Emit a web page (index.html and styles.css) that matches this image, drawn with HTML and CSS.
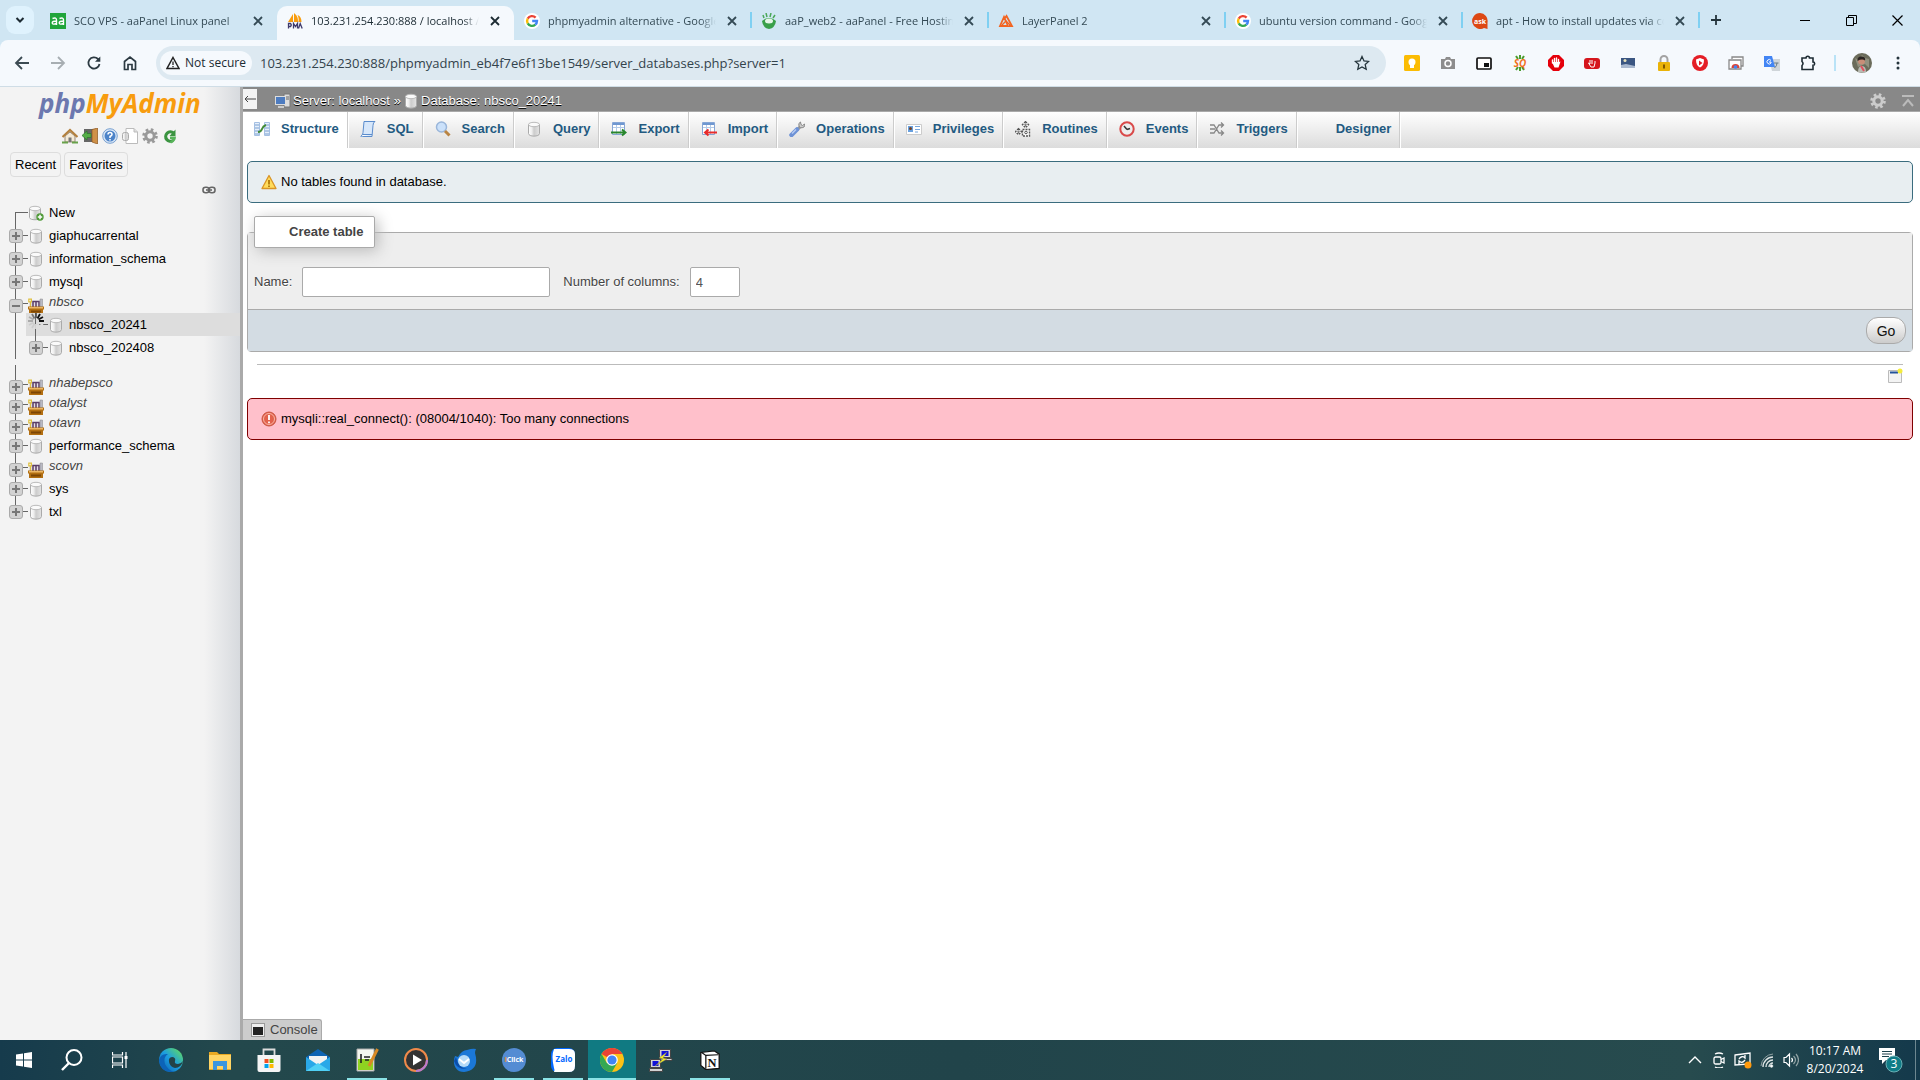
FILE: index.html
```html
<!DOCTYPE html>
<html lang="en">
<head>
<meta charset="utf-8">
<title>103.231.254.230:888 / localhost / nbsco_20241 | phpMyAdmin</title>
<link rel="stylesheet" href="styles.css">
</head>
<body>
<svg class="defs" aria-hidden="true">
  <defs>
    <linearGradient id="silver" x1="0" x2="1" y1="0" y2="0"><stop offset="0" stop-color="#fff"/><stop offset=".3" stop-color="#eee"/><stop offset=".5" stop-color="#ccc"/><stop offset="1" stop-color="#e4e4e4"/></linearGradient>
    <linearGradient id="edgeg" x1="0" x2="1" y1="1" y2="0"><stop offset="0" stop-color="#0c59a4"/><stop offset=".5" stop-color="#1b9de2"/><stop offset="1" stop-color="#6be34f"/></linearGradient>
  </defs>
  <symbol id="close" viewBox="0 0 16 16"><path d="M4 4l8 8M12 4l-8 8" stroke="currentColor" stroke-width="1.8"/></symbol>
  <symbol id="google" viewBox="0 0 16 16"><circle cx="8" cy="8" r="8" fill="#fff"/><g fill="none" stroke-width="2.4"><path d="M11.6 4.6A5 5 0 0 0 3.7 5.6" stroke="#ea4335"/><path d="M3.7 5.6a5 5 0 0 0 0 4.8" stroke="#fbbc05"/><path d="M3.7 10.4a5 5 0 0 0 7.6 1.3" stroke="#34a853"/><path d="M11.3 11.7A5 5 0 0 0 13 8H8.2" stroke="#4285f4"/></g></symbol>
  <symbol id="db" viewBox="0 0 16 16"><path d="M2.5 3.5v9c0 3.500 11 3.500 11 0v-9z" fill="url(#silver)" stroke="#aaa"/><ellipse cx="8" cy="3.500" rx="5.500" ry="2.200" fill="#fafafa" stroke="#bbb"/></symbol>
  <symbol id="dbnew" viewBox="0 0 16 16"><path d="M1.500 3.500v9c0 3 11 3 11 0v-9z" fill="url(#silver)" stroke="#aaa"/><ellipse cx="7" cy="3.500" rx="5.500" ry="2.200" fill="#fafafa" stroke="#bbb"/><circle cx="12" cy="12" r="3.700" fill="#4f9a38"/><path d="M12 9.800v4.400M9.800 12h4.400" stroke="#fff" stroke-width="1.500"/></symbol>
  <symbol id="plus" viewBox="0 0 14 14"><rect x=".5" y=".5" width="13" height="13" rx="2.500" fill="#d2d2d2" stroke="#aaa"/><path d="M7 3v8M3 7h8" stroke="#777" stroke-width="2"/></symbol>
  <symbol id="minus" viewBox="0 0 14 14"><rect x=".5" y=".5" width="13" height="13" rx="2.500" fill="#d2d2d2" stroke="#aaa"/><path d="M3 7h8" stroke="#777" stroke-width="2"/></symbol>
  <symbol id="group" viewBox="0 0 16 16"><path d="M1 9V3h13v6z" fill="#e4dfe6"/><path d="M.8 1.200h2.600v2.600H.8zM2.500 4v5" stroke="#dfc040" stroke-width="1.200" fill="none"/><path d="M5 9V3.500h6V9M8 3.500V9" stroke="#5a3d66" stroke-width="1.500" fill="none"/><path d="M12 1h2.500v8H12z" fill="#b9b9c4" stroke="#888" stroke-width=".5"/><path d="M0 8.500h16v3h-1V16H1v-4.500H0z" fill="#b26f12"/><path d="M1 9h14v1.500H1z" fill="#ecb765"/><path d="M3 12.500h10v2H3z" fill="#7d4605"/></symbol>
  <symbol id="gear" viewBox="0 0 16 16"><circle cx="8" cy="8" r="6.300" fill="none" stroke="currentColor" stroke-width="3" stroke-dasharray="2.500 2.448"/><circle cx="8" cy="8" r="4.200" fill="none" stroke="currentColor" stroke-width="3"/></symbol>
  <symbol id="spin" viewBox="0 0 16 16"><g stroke-width="1.800"><path d="M8 0v5" stroke="#555"/><path d="M12 1l-2.500 4.500" stroke="#111"/><path d="M15 4l-4.500 2.500M16 8h-5" stroke="#111"/><path d="M15 12l-4.500-2.500M12 15l-2.500-4.500M8 16v-5" stroke="#ddd"/><path d="M4 15l2.500-4.500M1 12l4.500-2.500" stroke="#ccc"/><path d="M0 8h5M1 4l4.500 2.500" stroke="#aaa"/><path d="M4 1l2.500 4.500" stroke="#777"/></g></symbol>
  <symbol id="pma" viewBox="0 0 16 16"><path d="M1 9L6 1v8zM7 9V0c4 3 4 6 4 9zM11.500 9c.5-3 0-5-1-7 3 1 4 4 4 7z" fill="#f89c0e"/><path d="M1.500 15.500v-5h2q1.500 1.500 0 3h-2M6.500 15.500v-5l2 3 2-3v5M11.500 15.500l1.700-5 2 5" fill="none" stroke="#3e3a6d" stroke-width="1.300"/></symbol>
</svg>

<header class="browser">
  <div class="tabstrip">
    <button class="tabsearch" aria-label="Search tabs"><svg width="10" height="8" viewBox="0 0 10 8"><path d="M1.500 2L5 5.500 8.500 2" fill="none" stroke="#1d2b33" stroke-width="2"/></svg></button>
    <div class="tabs">
      <div class="tab"><svg class="i16" viewBox="0 0 16 16"><rect width="16" height="16" fill="#20a53a"/><g fill="none" stroke="#fff" stroke-width="1.400"><path d="M2.500 5.500Q6.500 4 6.500 7v5M6.500 8Q2 8 2.200 10T6.500 10.500M9.500 5.500Q13.500 4 13.500 7v5M13.500 8Q9 8 9.200 10t4.300.5"/></g></svg><span>SCO VPS - aaPanel Linux panel</span><button aria-label="Close tab"><svg class="i16"><use href="#close"/></svg></button></div>
      <div class="tab active"><svg class="i16"><use href="#pma"/></svg><span>103.231.254.230:888 / localhost / nbsco</span><button aria-label="Close tab"><svg class="i16"><use href="#close"/></svg></button></div>
      <div class="tab sep"><svg class="i16"><use href="#google"/></svg><span>phpmyadmin alternative - Google Search</span><button aria-label="Close tab"><svg class="i16"><use href="#close"/></svg></button></div>
      <div class="tab sep"><svg class="i16" viewBox="0 0 16 16"><path d="M1 8q1 7 7 8 6-1 7-8-3-3-7-3T1 8z" fill="#39a04a"/><path d="M3 5L2 2M6 4L5 0M9 4l1-4M12 5l2-3" stroke="#4aa858" stroke-width="1.500"/><ellipse cx="8" cy="8" rx="4" ry="2.500" fill="#e7f6e9"/></svg><span>aaP_web2 - aaPanel - Free Hosting</span><button aria-label="Close tab"><svg class="i16"><use href="#close"/></svg></button></div>
      <div class="tab sep"><svg class="i16" viewBox="0 0 16 16"><path d="M2 13L6 4l4 9zM7 5l1.500-2L14 13h-3" fill="none" stroke="#f26522" stroke-width="1.800"/><path d="M4 12l4-4 4 4" fill="none" stroke="#f26522" stroke-width="1.300"/></svg><span>LayerPanel 2</span><button aria-label="Close tab"><svg class="i16"><use href="#close"/></svg></button></div>
      <div class="tab sep"><svg class="i16"><use href="#google"/></svg><span>ubuntu version command - Google</span><button aria-label="Close tab"><svg class="i16"><use href="#close"/></svg></button></div>
      <div class="tab sep"><svg class="i16" viewBox="0 0 16 16"><path d="M8 0a8 8 0 0 1 7.500 9.500V16L12 15A8 8 0 1 1 8 0z" fill="#dd4814"/><text x="8" y="10.500" text-anchor="middle" class="ask">ask</text></svg><span>apt - How to install updates via command</span><button aria-label="Close tab"><svg class="i16"><use href="#close"/></svg></button></div>
    </div>
    <button class="newtab" aria-label="New tab"><svg width="12" height="12" viewBox="0 0 12 12"><path d="M6 1v10M1 6h10" stroke="#24343c" stroke-width="1.800"/></svg></button>
    <div class="wincontrols">
      <button aria-label="Minimize"><svg width="10" height="10"><path d="M0 5.500h10" stroke="#000"/></svg></button>
      <button aria-label="Restore"><svg width="11" height="11" fill="none" stroke="#000"><path d="M.5 2.500h7v8h-7zM2.500 2V.5h8v8H8"/></svg></button>
      <button aria-label="Close"><svg width="11" height="11" stroke="#000" stroke-width="1.200"><path d="M.5.5l10 10M10.500.5l-10 10"/></svg></button>
    </div>
  </div>
  <div class="toolbar">
    <button class="tool" aria-label="Back"><svg class="i16" viewBox="0 0 16 16"><path d="M15 8H2M8 2L2 8l6 6" fill="none" stroke="#3b4a52" stroke-width="1.800"/></svg></button>
    <button class="tool" aria-label="Forward"><svg class="i16" viewBox="0 0 16 16"><path d="M1 8h13M8 2l6 6-6 6" fill="none" stroke="#a7aeb2" stroke-width="1.800"/></svg></button>
    <button class="tool" aria-label="Reload"><svg class="i16" viewBox="0 0 16 16"><path d="M13.500 9A5.600 5.600 0 1 1 12 4l1.500 1.500" fill="none" stroke="#2c3a42" stroke-width="1.800"/><path d="M14.300 1.500v5.200H9z" fill="#2c3a42"/></svg></button>
    <button class="tool" aria-label="Home"><svg class="i16" viewBox="0 0 16 16"><path d="M2.500 14.500V6.500L8 2l5.500 4.500v8H10v-5H6v5z" fill="none" stroke="#2c3a42" stroke-width="1.700"/></svg></button>
    <div class="omnibox">
      <button class="chip"><svg width="14" height="14" viewBox="0 0 14 14"><path d="M7 1.500L13 12.500H1z" fill="none" stroke="#222" stroke-width="1.500"/><path d="M7 5.500v3.500M7 10v1.300" stroke="#222" stroke-width="1.300"/></svg>Not secure</button>
      <input class="url" aria-label="Address" value="103.231.254.230:888/phpmyadmin_eb4f7e6f13be1549/server_databases.php?server=1">
      <button class="star" aria-label="Bookmark"><svg class="i16" viewBox="0 0 16 16"><path d="M8 1.500l2 4.400 4.700.5-3.500 3.200 1 4.700L8 11.900l-4.200 2.400 1-4.700L1.300 6.400 6 5.900z" fill="none" stroke="#24343c" stroke-width="1.300"/></svg></button>
    </div>
    <div class="extensions">
      <button class="tool" aria-label="Keep"><svg class="i16" viewBox="0 0 16 16"><rect width="16" height="16" rx="1.500" fill="#fbbc04"/><circle cx="8" cy="7" r="3.500" fill="#fff"/><path d="M6 10h4v3H6z" fill="#fff"/></svg></button>
      <button class="tool" aria-label="Screenshot"><svg class="i16" viewBox="0 0 16 16"><path d="M1 4h4l1-2h4l1 2h4v10H1z" fill="#8d8d8d"/><circle cx="8" cy="8.500" r="3" fill="#8d8d8d" stroke="#fff" stroke-width="1.500"/></svg></button>
      <button class="tool" aria-label="Picture in picture"><svg class="i16" viewBox="0 0 16 16"><rect x="1" y="3" width="14" height="11" rx="1" fill="#fff" stroke="#111" stroke-width="1.700"/><path d="M8 8h5v4H8z" fill="#111"/></svg></button>
      <button class="tool" aria-label="SEOquake"><svg class="i16" viewBox="0 0 16 16"><path d="M4 1l2 3M8 0v4M12 1l-2 3M4 15l2-3M8 16v-4M12 15l-2-3" stroke="#4b9c2e" stroke-width="2"/><text x="8" y="12" text-anchor="middle" class="sq">SQ</text></svg></button>
      <button class="tool" aria-label="Ad blocker"><svg class="i16" viewBox="0 0 16 16"><path d="M5 0h6l5 5v6l-5 5H5l-5-5V5z" fill="#e5000b"/><path d="M4.500 8V5M6.500 8V3.500M8.500 8V3M10.500 8V4.500" stroke="#fff" stroke-width="1.400" stroke-linecap="round"/><path d="M4 7h7.200l1.300-.5-2 6h-4z" fill="#fff"/></svg></button>
      <button class="tool" aria-label="Video blocker"><svg class="i16" viewBox="0 0 16 16"><rect y="3" width="16" height="11" rx="3" fill="#d5161d"/><path d="M6 5v4l-1.500-1L7 12h3l1-4V6M8 5v4" stroke="#fff" fill="none"/></svg></button>
      <button class="tool" aria-label="Remote desktop"><svg class="i16" viewBox="0 0 16 16"><path d="M1 3h14v10H1z" fill="#3a5682"/><path d="M1 10l5-1 9 2v2H1z" fill="#a8b8cf"/><circle cx="5" cy="5.500" r="1.500" fill="#e9e3bb"/></svg></button>
      <button class="tool" aria-label="Lock"><svg class="i16" viewBox="0 0 16 16"><path d="M4.500 8V4.500a3.500 3.500 0 0 1 7 0V8" fill="none" stroke="#a3a3a3" stroke-width="2"/><rect x="2" y="7" width="12" height="9" rx="1" fill="#eab308"/><path d="M8 9.500v4" stroke="#805800" stroke-width="2"/></svg></button>
      <button class="tool" aria-label="Shield"><svg class="i16" viewBox="0 0 16 16"><circle cx="8" cy="8" r="8" fill="#e41e26"/><path d="M8 3l4 1.500c0 4-1 6.500-4 8-3-1.500-4-4-4-8z" fill="#fff"/><path d="M7 5.500L10.500 8 7 10.500z" fill="#e41e26"/></svg></button>
      <button class="tool" aria-label="Web store"><svg class="i16" viewBox="0 0 16 16"><path d="M4 4V2h11v9h-2M1 5h12v9H1z" fill="#fff" stroke="#888" stroke-width="1.300"/><path d="M3.500 13a4 4 0 0 1 8 0z" fill="#db4437"/><circle cx="7.500" cy="12" r="1.800" fill="#4285f4"/></svg></button>
      <button class="tool" aria-label="Translate"><svg class="i16" viewBox="0 0 16 16"><path d="M5 4h11v12H8z" fill="#cfd5d9"/><path d="M0 1h8l3 11H0z" fill="#4285f4"/><path d="M7 5.500A2.200 2.200 0 1 0 7 8V7H5" fill="none" stroke="#fff"/><path d="M10 8h4.500M13 8q0 3-2.500 5" stroke="#667a86" fill="none"/></svg></button>
      <button class="tool" aria-label="Extensions"><svg class="i16" viewBox="0 0 16 16"><path d="M2 3h4a1.500 1.500 0 0 1 3.500 0H13v4a1.500 1.500 0 0 1 0 3.300V14.500H2v-4q2-1.800 0-4z" fill="none" stroke="#1d2b33" stroke-width="1.600"/></svg></button>
    </div>
    <i class="divider"></i>
    <button class="tool" aria-label="Profile"><svg width="20" height="20" viewBox="0 0 20 20"><circle cx="10" cy="10" r="10" fill="#6b6c5b"/><path d="M3 5l4 2 3-5 3 3 4 1v9l-4-4-7 3z" fill="#92917f"/><circle cx="9.500" cy="8" r="3.500" fill="#c98e78"/><path d="M5.500 8Q5 3 10 3.500q4 .5 3 4-3-2-7.500.5z" fill="#2b2522"/><path d="M6 19q0-6 4-6t4 6.200Q9.500 20.500 6 19z" fill="#b9bcb4"/><path d="M9 13l3 5" stroke="#e2505e" stroke-width="2"/></svg></button>
    <button class="tool" aria-label="Menu"><svg class="i16" viewBox="0 0 16 16" fill="#24343c"><circle cx="8" cy="3" r="1.500"/><circle cx="8" cy="8" r="1.500"/><circle cx="8" cy="13" r="1.500"/></svg></button>
  </div>
</header>

<div class="page">
  <nav class="sidebar">
    <a class="logo" href="#"><span>php</span>MyAdmin</a>
    <div class="navicons">
      <a href="#" aria-label="Home"><svg class="i16" viewBox="0 0 16 16"><path d="M3 8v6h10V8L8 4z" fill="#f3ead8" stroke="#97897a"/><path d="M.5 9L8 2l7.500 7" fill="none" stroke="#b3803e" stroke-width="2.200"/><path d="M6.500 14V9.500h3V14" fill="#777"/><path d="M0 14.500h6M10 14.500h6" stroke="#68a24a" stroke-width="2"/></svg></a>
      <a href="#" aria-label="Log out"><svg class="i16" viewBox="0 0 16 16"><path d="M2 1h13v13H2z" fill="#666"/><path d="M10 1.500L15.500 0v16L10 14z" fill="#cf9148" stroke="#8b5520" stroke-width=".7"/><path d="M0 7.500L5 3v2.500h4v4H5V12z" fill="#55ad47" stroke="#2b7a2b" stroke-width=".7"/></svg></a>
      <a href="#" aria-label="Documentation"><svg class="i16" viewBox="0 0 16 16"><circle cx="8" cy="8" r="7.300" fill="#dbe8f7" stroke="#78a0d0"/><circle cx="8" cy="8" r="5.500" fill="#4c83c8"/><path d="M6 6.500Q6 4.500 8 4.500t2 2Q10 7.500 8 8.500V10M8 11v1.500" fill="none" stroke="#fff" stroke-width="1.500"/></svg></a>
      <a href="#" aria-label="phpMyAdmin docs"><svg class="i16" viewBox="0 0 16 16"><path d="M4 .5h8l3.500 3.500v11.500H4z" fill="#fff" stroke="#bbb"/><path d="M12 .5V4h3.500" fill="#ddd" stroke="#bbb"/><rect x=".5" y="4.500" width="6" height="8" rx="2" fill="url(#silver)" stroke="#aaa"/></svg></a>
      <a href="#" class="grey" aria-label="Settings"><svg class="i16"><use href="#gear"/></svg></a>
      <a href="#" aria-label="Reload"><svg class="i16" viewBox="0 0 16 16"><path d="M11.500 5A4.700 4.700 0 1 0 11 12.500" fill="none" stroke="#3b9440" stroke-width="3.200"/><path d="M13.500 1.500V8H7.500z" fill="#3b9440"/><path d="M8 8.500h6q0 5-5 7l-1-2q2-1 2-2.500H8z" fill="#58b45a"/></svg></a>
    </div>
    <div class="quick"><button>Recent</button><button>Favorites</button></div>
    <div class="linkrow"><svg width="14" height="8" viewBox="0 0 14 8" fill="none" stroke="#666" stroke-width="1.600"><rect x="1" y="1.200" width="6" height="5.600" rx="2.500"/><rect x="7" y="1.200" width="6" height="5.600" rx="2.500"/><path d="M4 4h6"/></svg></div>
    <ul class="tree">
      <li class="row first"><span class="exp"></span><svg class="i16"><use href="#dbnew"/></svg><a href="#">New</a></li>
      <li class="row"><span class="exp"><svg><use href="#plus"/></svg></span><svg class="i16"><use href="#db"/></svg><a href="#">giaphucarrental</a></li>
      <li class="row"><span class="exp"><svg><use href="#plus"/></svg></span><svg class="i16"><use href="#db"/></svg><a href="#">information_schema</a></li>
      <li class="row"><span class="exp"><svg><use href="#plus"/></svg></span><svg class="i16"><use href="#db"/></svg><a href="#">mysql</a></li>
      <li class="row folder"><span class="exp"><svg><use href="#minus"/></svg></span><svg class="i16"><use href="#group"/></svg><a href="#">nbsco</a></li>
      <li class="branch">
        <ul>
          <li class="row selected"><span class="exp"><svg class="spinner"><use href="#spin"/></svg></span><svg class="i16"><use href="#db"/></svg><a href="#">nbsco_20241</a></li>
          <li class="row last"><span class="exp"><svg><use href="#plus"/></svg></span><svg class="i16"><use href="#db"/></svg><a href="#">nbsco_202408</a></li>
        </ul>
      </li>
      <li class="row folder restart"><span class="exp"><svg><use href="#plus"/></svg></span><svg class="i16"><use href="#group"/></svg><a href="#">nhabepsco</a></li>
      <li class="row folder"><span class="exp"><svg><use href="#plus"/></svg></span><svg class="i16"><use href="#group"/></svg><a href="#">otalyst</a></li>
      <li class="row folder"><span class="exp"><svg><use href="#plus"/></svg></span><svg class="i16"><use href="#group"/></svg><a href="#">otavn</a></li>
      <li class="row"><span class="exp"><svg><use href="#plus"/></svg></span><svg class="i16"><use href="#db"/></svg><a href="#">performance_schema</a></li>
      <li class="row folder"><span class="exp"><svg><use href="#plus"/></svg></span><svg class="i16"><use href="#group"/></svg><a href="#">scovn</a></li>
      <li class="row"><span class="exp"><svg><use href="#plus"/></svg></span><svg class="i16"><use href="#db"/></svg><a href="#">sys</a></li>
      <li class="row last"><span class="exp"><svg><use href="#plus"/></svg></span><svg class="i16"><use href="#db"/></svg><a href="#">txl</a></li>
    </ul>
  </nav>

  <main class="main">
    <div class="crumbs">
      <button class="collapse" aria-label="Hide panel"><svg width="12" height="8" viewBox="0 0 12 8"><path d="M12 4H1M4 1L1 4l3 3" fill="none" stroke="#444"/></svg></button>
      <svg class="i16" viewBox="0 0 16 16"><path d="M9 1h6v13H9z" fill="#ddd" stroke="#777"/><path d="M10 4h4M10 6h4" stroke="#666"/><rect x=".5" y="3.500" width="10" height="8" fill="#4e7cc0" stroke="#ddd"/><path d="M3 14h6" stroke="#ccc" stroke-width="2"/></svg>
      <a href="#">Server: localhost</a><span class="raquo">»</span>
      <svg class="i16"><use href="#db"/></svg><a href="#">Database: nbsco_20241</a>
      <div class="pageactions"><svg class="i16"><use href="#gear"/></svg><svg class="i16" viewBox="0 0 16 16" fill="none" stroke="#bbb" stroke-width="2"><path d="M2 3h12M3 13l5-6 5 6"/></svg></div>
    </div>
    <nav class="menu">
      <a class="current" href="#"><svg class="i16" viewBox="0 0 16 16"><path d="M.5 1.500h5v13h-5zM10.500 1.500h5v13h-5z" fill="#e6effa" stroke="#a4bfe2"/><path d="M1 4h4M1 7h4M1 10h4M1 13h4M11 4h4M11 7h4M11 10h4M11 13h4" stroke="#789fd0"/><path d="M4 11q3 0 4-3t4-4" fill="none" stroke="#428b35" stroke-width="2"/></svg>Structure</a>
      <a href="#"><svg class="i16" viewBox="0 0 16 16"><path d="M4 .5h11q-2 1-2 4l-1 11H1q2-1 2-4z" fill="#d7e7fa" stroke="#5b8ccc"/><path d="M1 15.500q1-3 3-2h8" fill="#fff" stroke="#5b8ccc"/></svg>SQL</a>
      <a href="#"><svg class="i16" viewBox="0 0 16 16"><circle cx="6.500" cy="6" r="5" fill="#cbe1fa" stroke="#9ab6da" stroke-width="1.500"/><path d="M10 10l4.500 4.500" stroke="#b98444" stroke-width="3"/></svg>Search</a>
      <a href="#"><svg class="i16"><use href="#db"/></svg>Query</a>
      <a href="#"><svg class="i16" viewBox="0 0 16 16"><path d="M1.500 1.500h12v12h-12z" fill="#fff" stroke="#86a6d6"/><path d="M2 3h11" stroke="#6f97d0" stroke-width="2"/><path d="M2 6.500h11M5.500 4v9M9.500 4v9" stroke="#b4cbe8"/><path d="M0 11.500h13M11 8.500l3.500 3-3.500 3" fill="none" stroke="#28862c" stroke-width="2"/></svg>Export</a>
      <a href="#"><svg class="i16" viewBox="0 0 16 16"><path d="M1.500 1.500h12v12h-12z" fill="#fff" stroke="#86a6d6"/><path d="M2 3h11" stroke="#6f97d0" stroke-width="2"/><path d="M2 6.500h11M5.500 4v9M9.500 4v9" stroke="#b4cbe8"/><path d="M16 11.500H4M7.500 8.500l-3.500 3 3.500 3" fill="none" stroke="#e82c2c" stroke-width="2"/></svg>Import</a>
      <a href="#"><svg class="i16" viewBox="0 0 16 16"><path d="M8 9l3-3" stroke="#999" stroke-width="3"/><path d="M11.500 1q-2.500 1-1.500 4t5 1q1-1 .5-3l-2 1.500-1.500-1z" fill="#ccc" stroke="#888"/><path d="M2.500 14L8 8.500" stroke="#6e92d6" stroke-width="4.500" stroke-linecap="round"/><path d="M3 12.500L7 8.500" stroke="#b7cdf3" stroke-width="1.500"/></svg>Operations</a>
      <a href="#"><svg class="i16" viewBox="0 0 16 16"><path d="M.5 3.500h15v10H.5z" fill="#fff" stroke="#ccc"/><path d="M2 5h5v6H2z" fill="#68a0df"/><circle cx="4.500" cy="7.500" r="1.500" fill="#704024"/><path d="M9 5.500h5M9 8.500h5M9 11h3" stroke="#76a6dd"/></svg>Privileges</a>
      <a href="#"><svg class="i16" viewBox="0 0 16 16" fill="#fff" stroke="#555"><path d="M10.500.7L13.500 3.700l-3 3-3-3zM3.500 7.700l3 3-3 3-3-3z" stroke-width="1.400" stroke-dasharray="2 1"/><path d="M7.500 8.500h7v6.500h-7z" stroke-width="1.400" stroke-dasharray="2 1"/><circle cx="11" cy="11.500" r="1.300"/><circle cx="10.500" cy="3.700" r=".7"/><circle cx="3.500" cy="10.700" r=".7"/></svg>Routines</a>
      <a href="#"><svg class="i16" viewBox="0 0 16 16"><circle cx="8" cy="8" r="6.700" fill="#eee" stroke="#d94a4a" stroke-width="2"/><path d="M8 8.500L5 5M8 8.500l3-1" stroke="#333" stroke-width="1.500"/></svg>Events</a>
      <a href="#"><svg class="i16" viewBox="0 0 16 16" fill="none" stroke="#888" stroke-width="1.300"><path d="M1 4h4l5 8h4M1 12h4l5-8h4M12 1.500L14.500 4 12 6.500M12 9.500l2.500 2.500-2.500 2.500M1 8h5"/></svg>Triggers</a>
      <a href="#"><span class="i16"></span>Designer</a>
    </nav>
    <div class="content">
      <div class="notice"><svg class="i16" viewBox="0 0 16 16"><path d="M8 1.500l7 13H1z" fill="#ffdc5c" stroke="#d99426" stroke-width="1.300" stroke-linejoin="round"/><path d="M8 6v4.500M8 11.500v1.500" stroke="#a86e00" stroke-width="1.600"/></svg>No tables found in database.</div>
      <form class="create">
        <div class="fields">
          <h2 class="legend">Create table</h2>
          <div class="inputs">
            <label for="tname">Name:</label><input id="tname" class="tname" type="text">
            <label for="tcols">Number of columns:</label><input id="tcols" class="tcols" type="text" value="4">
          </div>
        </div>
        <div class="footer"><button type="button">Go</button></div>
      </form>
      <hr>
      <div class="newwin"><svg class="i16" viewBox="0 0 16 16"><path d="M1.500 2.500h13v12h-13z" fill="#f3f3f3" stroke="#bbb"/><path d="M3 4.500h8" stroke="#23539a" stroke-width="2"/><circle cx="13" cy="3" r="2.500" fill="#f4ec3c"/></svg></div>
      <div class="notice error"><svg class="i16" viewBox="0 0 16 16"><circle cx="8" cy="8" r="7" fill="#e2614c" stroke="#c95440"/><circle cx="8" cy="8" r="5.500" fill="none" stroke="#f8b5a5"/><path d="M8 4v5M8 10.500v1.800" stroke="#fff" stroke-width="1.800"/></svg>mysqli::real_connect(): (08004/1040): Too many connections</div>
    </div>
    <button class="console"><svg width="14" height="14"><rect x=".5" y=".5" width="13" height="13" fill="#eee" stroke="#999"/><path d="M2 4h10v8H2z" fill="#222"/></svg>Console</button>
  </main>
</div>

<footer class="taskbar">
  <button class="sys" aria-label="Start"><svg class="i16" viewBox="0 0 16 16" fill="#fff"><path d="M0 2.500l7-1v6H0zM8 1.300L16 0v7.500H8zM0 8.500h7v6l-7-1zM8 8.500h8V16l-8-1.300z"/></svg></button>
  <button class="sys" aria-label="Search"><svg width="22" height="22" viewBox="0 0 22 22" fill="none" stroke="#fff" stroke-width="2"><circle cx="13" cy="8.500" r="7.500"/><path d="M8 14l-7 7" stroke-width="2.400"/></svg></button>
  <button class="sys" aria-label="Task view"><svg class="i16" viewBox="0 0 16 16" fill="none" stroke="#fff" stroke-width="1.200"><path d="M.5 0v3h10V0M.5 5h10v6H.5zM.5 16v-3h10v3M14 0v16"/><path d="M14 4v3" stroke-width="3"/></svg></button>
  <div class="apps">
    <button aria-label="Edge"><svg viewBox="0 0 24 24"><circle cx="12" cy="12" r="12" fill="url(#edgeg)"/><path d="M0 12q2-7 9-6-5 3-3 10 2 5 9 8Q1 25 0 12z" fill="#0c63b8"/><path d="M10 14q-1-5 4-5 3 1 2 4-1 3 3 3 3 0 5-3-2 7-8 7-5-1-6-6z" fill="#234348"/></svg></button>
    <button aria-label="File Explorer"><svg viewBox="0 0 24 24"><path d="M1 4h8l2 2h12v16H1z" fill="#e9a922"/><path d="M1 7h22v14H1z" fill="#ffd565"/><path d="M5 13h14v9h-4v-4H9v4H5z" fill="#3a96dd"/></svg></button>
    <button aria-label="Store"><svg viewBox="0 0 24 24"><path d="M6.500 8V1.500h11V8" fill="none" stroke="#ddd" stroke-width="1.800"/><path d="M.5 7h23v15q0 2-2 2h-19q-2 0-2-2z" fill="#f5f5f5"/><path d="M7.500 11h4v4h-4z" fill="#f25022"/><path d="M12.500 11h4v4h-4z" fill="#7fba00"/><path d="M7.500 16h4v4h-4z" fill="#00a4ef"/><path d="M12.500 16h4v4h-4z" fill="#ffb900"/></svg></button>
    <button aria-label="Mail"><svg viewBox="0 0 24 24"><path d="M0 9l12-8 12 8v5H0z" fill="#0f64b3"/><path d="M3 8h18v8H3z" fill="#f3f3f3"/><path d="M0 9l12 8 12-8v14H0z" fill="#2aa8e8"/><path d="M0 23l12-8 12 8z" fill="#50d0f5"/></svg></button>
    <button class="open" aria-label="Notepad++"><svg viewBox="0 0 24 24"><path d="M2 1h17v22H2z" fill="#f4f6ee" stroke="#aaa"/><path d="M3 11h15v11H3z" fill="#8fd321"/><path d="M6 6v9M9 9h6M10 12h4" stroke="#222" stroke-width="1.600"/><path d="M22.500 1L14 18" stroke="#d88a25" stroke-width="3"/></svg></button>
    <button aria-label="Media Player"><svg viewBox="0 0 24 24"><circle cx="12" cy="12" r="11" fill="#333" stroke="#f08a4a" stroke-width="2"/><path d="M12 23a11 11 0 0 0 11-11" fill="none" stroke="#b97ad1" stroke-width="2"/><path d="M9 6.500l9 5.500-9 5.500z" fill="#fff"/></svg></button>
    <button aria-label="Thunderbird"><svg viewBox="0 0 24 24"><path d="M11 24C2 24-1 15 2 8l3 1Q9 2 14 2q6-2 9-1-1 2-1 4 5 17-11 19z" fill="#1b78d8"/><path d="M1 13q3 9 13 8-9-1-11-12z" fill="#0b4da8"/><circle cx="11" cy="13" r="6" fill="#b5dbf8"/><path d="M6 11l5 4 5-4" fill="none" stroke="#fff" stroke-width="1.800"/></svg></button>
    <button class="open" aria-label="iClick"><svg viewBox="0 0 24 24"><circle cx="12" cy="12" r="12" fill="#548cd3"/><text x="12" y="14" text-anchor="middle" class="iclick"><tspan fill="#f59332">i</tspan>Click</text></svg></button>
    <button class="open" aria-label="Zalo"><svg viewBox="0 0 24 24"><rect width="24" height="24" rx="6" fill="#0068ff"/><path d="M3 1h15q6 0 6 5v12q0 6-6 6H8l-5 0q1-2 0-4Q0 8 3 1z" fill="#fff"/><text x="13" y="14" text-anchor="middle" class="zalo">Zalo</text></svg></button>
    <button class="open current" aria-label="Chrome"><svg viewBox="0 0 24 24"><circle cx="12" cy="12" r="12" fill="#fbc116"/><path d="M12 12L1.600 6A12 12 0 0 1 22.400 6H12z" fill="#ea4335"/><path d="M1.600 6A12 12 0 0 0 12 24l5.200-9L12 12 6.800 15z" fill="#34a853"/><circle cx="12" cy="12" r="5.800" fill="#fff"/><circle cx="12" cy="12" r="4.600" fill="#4285f4"/></svg></button>
    <button aria-label="PuTTY"><svg viewBox="0 0 24 24"><g stroke="#444" fill="#d3d3d3"><path d="M10.500 1.500h11v8h-11zM12 10.500h11v2H12zM1.500 11.500h10v8h-10zM.5 20.500h13v3H.5z"/></g><path d="M12.500 3h7v5h-7zM3.500 13h6v5h-6z" fill="#1010d8"/><path d="M18 4l-8 6 4 1-8 7 12-7-4-1z" fill="#f5ef18" stroke="#777" stroke-width=".5"/></svg></button>
    <button class="open" aria-label="Notion"><svg class="small" viewBox="0 0 24 24"><path d="M1 3l16-2 6 4v17l-16 1.500-6-5z" fill="#fff" stroke="#111" stroke-width="1.500"/><path d="M2 3l5 3.500 15-.8M7 6.500v16" fill="none" stroke="#111" stroke-width="1.500"/><text x="14.500" y="20" text-anchor="middle" class="notion">N</text></svg></button>
  </div>
  <div class="tray">
    <button aria-label="Show hidden icons"><svg class="i16" viewBox="0 0 16 16"><path d="M2 11l6-6 6 6" fill="none" stroke="#fff" stroke-width="1.400"/></svg></button>
    <button aria-label="Meet now"><svg class="i16" viewBox="0 0 16 16" fill="none" stroke="#fff" stroke-width="1.300"><rect x="3" y="5" width="7" height="7" rx="1.500"/><path d="M10 7.500l3-1.500v5l-3-1.500M4 2q4-2 8 0M4 15q4 2 8 0"/></svg></button>
    <button aria-label="Update"><svg width="18" height="18" viewBox="0 0 18 18" fill="none" stroke="#fff" stroke-width="1.300"><path d="M1 4l15-2v11L1 14z"/><path d="M5 8q3-4 6-1V4M11 9q-3 4-6 1v3"/><circle cx="14" cy="14" r="3.500" fill="#ff9a0d" stroke="none"/></svg></button>
    <button aria-label="Network"><svg class="i16" viewBox="0 0 16 16" fill="none" stroke="#dce3e3"><path d="M2 14A13 13 0 0 1 14 2" stroke="#8fa0a2"/><path d="M4 15A10 10 0 0 1 14 5M7 15a7 7 0 0 1 7-7M10 15a4 4 0 0 1 4-4" stroke-width="1.400"/><circle cx="12.500" cy="14" r="1.300" fill="#fff"/></svg></button>
    <button aria-label="Volume"><svg class="i16" viewBox="0 0 16 16" fill="none" stroke="#fff" stroke-width="1.200"><path d="M1 5.500h2L6.500 2v12L3 10.500H1zM8.500 6q2 2 0 4"/><path d="M10.500 4q4 4 0 8M13 2q5 6 0 12" stroke="#91a3a5"/></svg></button>
    <div class="clock"><span>10:17 AM</span><span>8/20/2024</span></div>
    <button class="notif" aria-label="3 notifications"><svg width="26" height="26" viewBox="0 0 26 26"><path d="M1 1h16v12H8l-4 4v-4H1z" fill="#fff"/><path d="M4 4.500h10M4 7h10M4 9.500h7" stroke="#1c414b"/><circle cx="16" cy="17" r="8" fill="#107c87" stroke="#6ab0b5"/><text x="16" y="21" text-anchor="middle" class="count">3</text></svg></button>
    <i class="peek"></i>
  </div>
</footer>
</body>
</html>
```
FILE: styles.css
```css
* { box-sizing: border-box; }
body {
  margin: 0;
  min-height: 100vh;
  display: flex;
  flex-direction: column;
  background: #fff;
  color: #000;
  font: 13px/16px "Liberation Sans", Arial, sans-serif;
}
button, input { font: inherit; color: inherit; border: 0; padding: 0; margin: 0; background: none; }
button { display: flex; align-items: center; justify-content: center; }
a { color: inherit; text-decoration: none; }
ul { margin: 0; padding: 0; list-style: none; }
svg { flex: none; display: block; }
.defs { position: absolute; width: 0; height: 0; }
.i16 { width: 16px; height: 16px; flex: none; }

/* Browser frame */
.browser { background: #d0e6f3; font-family: "Open Sans", "Noto Sans", sans-serif; font-size: 12px; }
.tabstrip { display: flex; height: 40px; padding-left: 6px; }
.tabsearch { width: 28px; height: 28px; margin: 6px 6px 0 0; border-radius: 9px; background: #dff2fd; }
.tabs { display: flex; flex: 0 1 1659px; min-width: 0; }
.tab {
  flex: 1 1 0;
  min-width: 0;
  display: flex;
  align-items: center;
  gap: 8px;
  height: 34px;
  margin-top: 6px;
  padding: 0 11px 5px 10px;
  color: #344a55;
  font-size: 11px;
  position: relative;
}
.tab span {
  flex: 1;
  overflow: hidden;
  white-space: nowrap;
  mask-image: linear-gradient(to right, #000 calc(100% - 16px), transparent);
}
.tab.active { background: #f5f9fd; border-radius: 10px 10px 0 0; color: #1c2b33; }
.tab.sep::after { content: ""; position: absolute; right: -1px; top: 6px; width: 2px; height: 16px; background: #7fd0f2; }
.newtab { width: 34px; height: 40px; }
.wincontrols { display: flex; margin-left: auto; }
.wincontrols button { width: 46px; height: 40px; }
.toolbar {
  display: flex;
  align-items: center;
  height: 47px;
  padding: 0 4px;
  background: #f5f9fd;
  border-radius: 8px 8px 0 0;
  border-bottom: 1px solid #cfdde6;
}
.tool { width: 36px; height: 34px; }
.omnibox { flex: 1; display: flex; align-items: center; height: 34px; margin: 0 8px; padding: 0 16px 0 4px; border-radius: 17px; background: #dde9f1; }
.chip { height: 24px; width: 92px; gap: 5px; border-radius: 12px; background: #f5f9fd; color: #1c2b33; white-space: nowrap; }
.url { flex: 1; min-width: 0; margin-left: 8px; font-size: 13px; color: #33434c; }
.extensions { display: flex; }
.divider { width: 2px; height: 16px; margin: 0 8px; background: #b9e3f7; }
.ask { font: bold 7px "Open Sans", sans-serif; fill: #fff; }
.sq { font: italic bold 10px "Open Sans", sans-serif; fill: #f2711c; }

/* Navigation panel */
.page { flex: 1; display: flex; }
.sidebar {
  flex: none;
  width: 243px;
  border-right: 3px solid #aaa;
  background: linear-gradient(to left, #d7dade, #f3f3f3 36px);
}
.logo { display: block; padding-left: 39px; color: #f89c0e; font: italic bold 26px/32px "Open Sans", sans-serif; }
.logo span { color: #6c78af; }
.navicons { display: flex; gap: 4px; margin: 9px 0 0 62px; }
.grey { color: #999; }
.quick { display: flex; gap: 3px; margin: 8px 0 0 10px; }
.quick button { height: 25px; padding: 0 4px; border: 1px solid #ddd; border-radius: 4px; font-size: 13px; }
.linkrow { display: flex; justify-content: flex-end; margin: 9px 24px 0 0; }
.tree { margin-top: 7px; padding-left: 6px; }
.row { display: flex; align-items: center; height: 23px; color: #000; }
.row a { margin-left: 5px; white-space: nowrap; }
.exp {
  display: flex;
  align-items: center;
  align-self: stretch;
  width: 22px;
  padding-left: 3px;
  background:
    linear-gradient(#666, #666) 9px 0 / 1px 100% no-repeat,
    linear-gradient(#666, #666) 10px center / 12px 1px no-repeat;
}
.exp svg { width: 14px; height: 14px; }
.exp .spinner { width: 16px; height: 16px; margin: -7px 0 0 -1px; }
.first .exp { background-position: 9px 11px, 10px center; }
.last .exp { background-size: 1px 50%, 12px 1px; }
.folder { height: 20px; color: #444; font-style: italic; }
.folder > svg, .folder .exp svg { margin-top: 5px; }
.folder a { padding-bottom: 2px; }
.branch { display: flex; padding-left: 20px; background: linear-gradient(#666, #666) 9px 0 / 1px 100% no-repeat; }
.branch ul { flex: 1; }
.selected { background: #ddd; }
.restart { height: 35px; padding-top: 15px; background: linear-gradient(#666, #666) 9px 100% / 1px 29px no-repeat; }

/* Work area */
.main { flex: 1; min-width: 0; display: flex; flex-direction: column; }
.crumbs { display: flex; align-items: center; height: 24px; padding: 3px 4px 0 0; background: #888; color: #fff; text-shadow: 0 1px 0 #000; }
.crumbs a { margin-left: 2px; }
.collapse { width: 14px; height: 20px; margin: 0 18px 4px 0; background: #f3f3f3; }
.raquo { margin: 0 2px 0 4px; }
.pageactions { display: flex; gap: 14px; margin-left: auto; color: #ccc; }
.menu {
  display: flex;
  height: 37px;
  border-top: 1px solid #aaa;
  background: linear-gradient(#fff, #dcdcdc);
}
.menu a {
  display: flex;
  align-items: center;
  gap: 11px;
  padding: 0 9px 2px 11px;
  border-right: 1px solid #fff;
  box-shadow: inset -1px 0 #ccc;
  color: #235a81;
  font-weight: bold;
}
.menu .current { background: #fff; }
.content { padding: 13px 7px 0 4px; }
.notice {
  display: flex;
  align-items: center;
  gap: 4px;
  height: 42px;
  padding: 0 13px;
  border: 1px solid #3a6c7e;
  border-radius: 5px;
  background: #e8eef1;
}
.error { border-color: #800000; background: #ffc0cb; }
.create { margin-top: 29px; border: 1px solid #aaa; border-radius: 4px; color: #444; text-shadow: 0 1px 0 #fff; }
.fields { height: 76px; padding: 0 6px; background: #eee; display: flex; flex-direction: column; align-items: flex-start; }
.legend {
  flex: none;
  margin: -17px 0 0;
  padding: 7px 11px 7px 34px;
  border: 1px solid #aaa;
  border-radius: 2px;
  background: #fff;
  box-shadow: 3px 3px 15px #bbb;
  font: bold 13px/16px "Liberation Sans", Arial, sans-serif;
}
.inputs { display: flex; align-items: center; margin-top: 19px; }
.inputs input { height: 30px; padding: 0 5px; border: 1px solid #aaa; border-radius: 2px; background: #fff; }
.inputs .tname { width: 248px; margin: 0 13px 0 10px; }
.inputs .tcols { width: 50px; margin-left: 10px; color: #555; }
.footer { display: flex; justify-content: flex-end; align-items: center; height: 42px; padding: 0 6px; border-top: 1px solid #aaa; background: #d3dce3; }
.footer button {
  width: 40px;
  height: 27px;
  border: 1px solid #aaa;
  border-radius: 12px;
  background: linear-gradient(#fff, #ccc);
  color: #111;
  font-size: 14px;
}
hr { margin: 12px 10px 0; border: 0; border-top: 1px solid #bbb; }
.newwin { display: flex; justify-content: flex-end; padding: 3px 10px 14px; }
.console {
  align-self: flex-start;
  margin-top: auto;
  height: 21px;
  padding: 0 3px 0 8px;
  gap: 5px;
  border: 1px solid #aaa;
  border-width: 1px 1px 0 0;
  border-radius: 0 3px 0 0;
  background: #ccc;
  color: #444;
}

/* Taskbar */
.taskbar {
  display: flex;
  height: 40px;
  background: linear-gradient(to right, #163b4c, #23484c 12%, #21444a 50%, #274b4e 88%, #14394b);
  color: #fff;
  font: 12px/18px "Open Sans", "Noto Sans", sans-serif;
}
.sys { width: 48px; height: 40px; }
.apps { display: flex; margin-left: 3px; gap: 1px; }
.apps button { width: 48px; height: 40px; }
.apps svg { width: 24px; height: 24px; }
.apps .small { width: 20px; height: 20px; }
.apps .open { background: linear-gradient(#8be3e6, #8be3e6) center bottom / 40px 2px no-repeat; }
.apps .current { background: linear-gradient(#8be3e6, #8be3e6) center bottom / 48px 2px no-repeat #107a82; }
.tray { display: flex; align-items: center; margin-left: auto; }
.tray button { width: 24px; height: 40px; }
.clock { display: flex; flex-direction: column; align-items: center; width: 64px; }
.tray .notif { width: 48px; }
.peek { width: 5px; height: 40px; border-left: 1px solid #6d8790; }
.iclick { font: bold 7px "Open Sans", sans-serif; fill: #fff; }
.zalo { font: bold 8px "Open Sans", sans-serif; fill: #0068ff; }
.notion { font: bold 15px "Liberation Serif", serif; fill: #111; }
.count { font: 12px "Open Sans", sans-serif; fill: #fff; }
```
